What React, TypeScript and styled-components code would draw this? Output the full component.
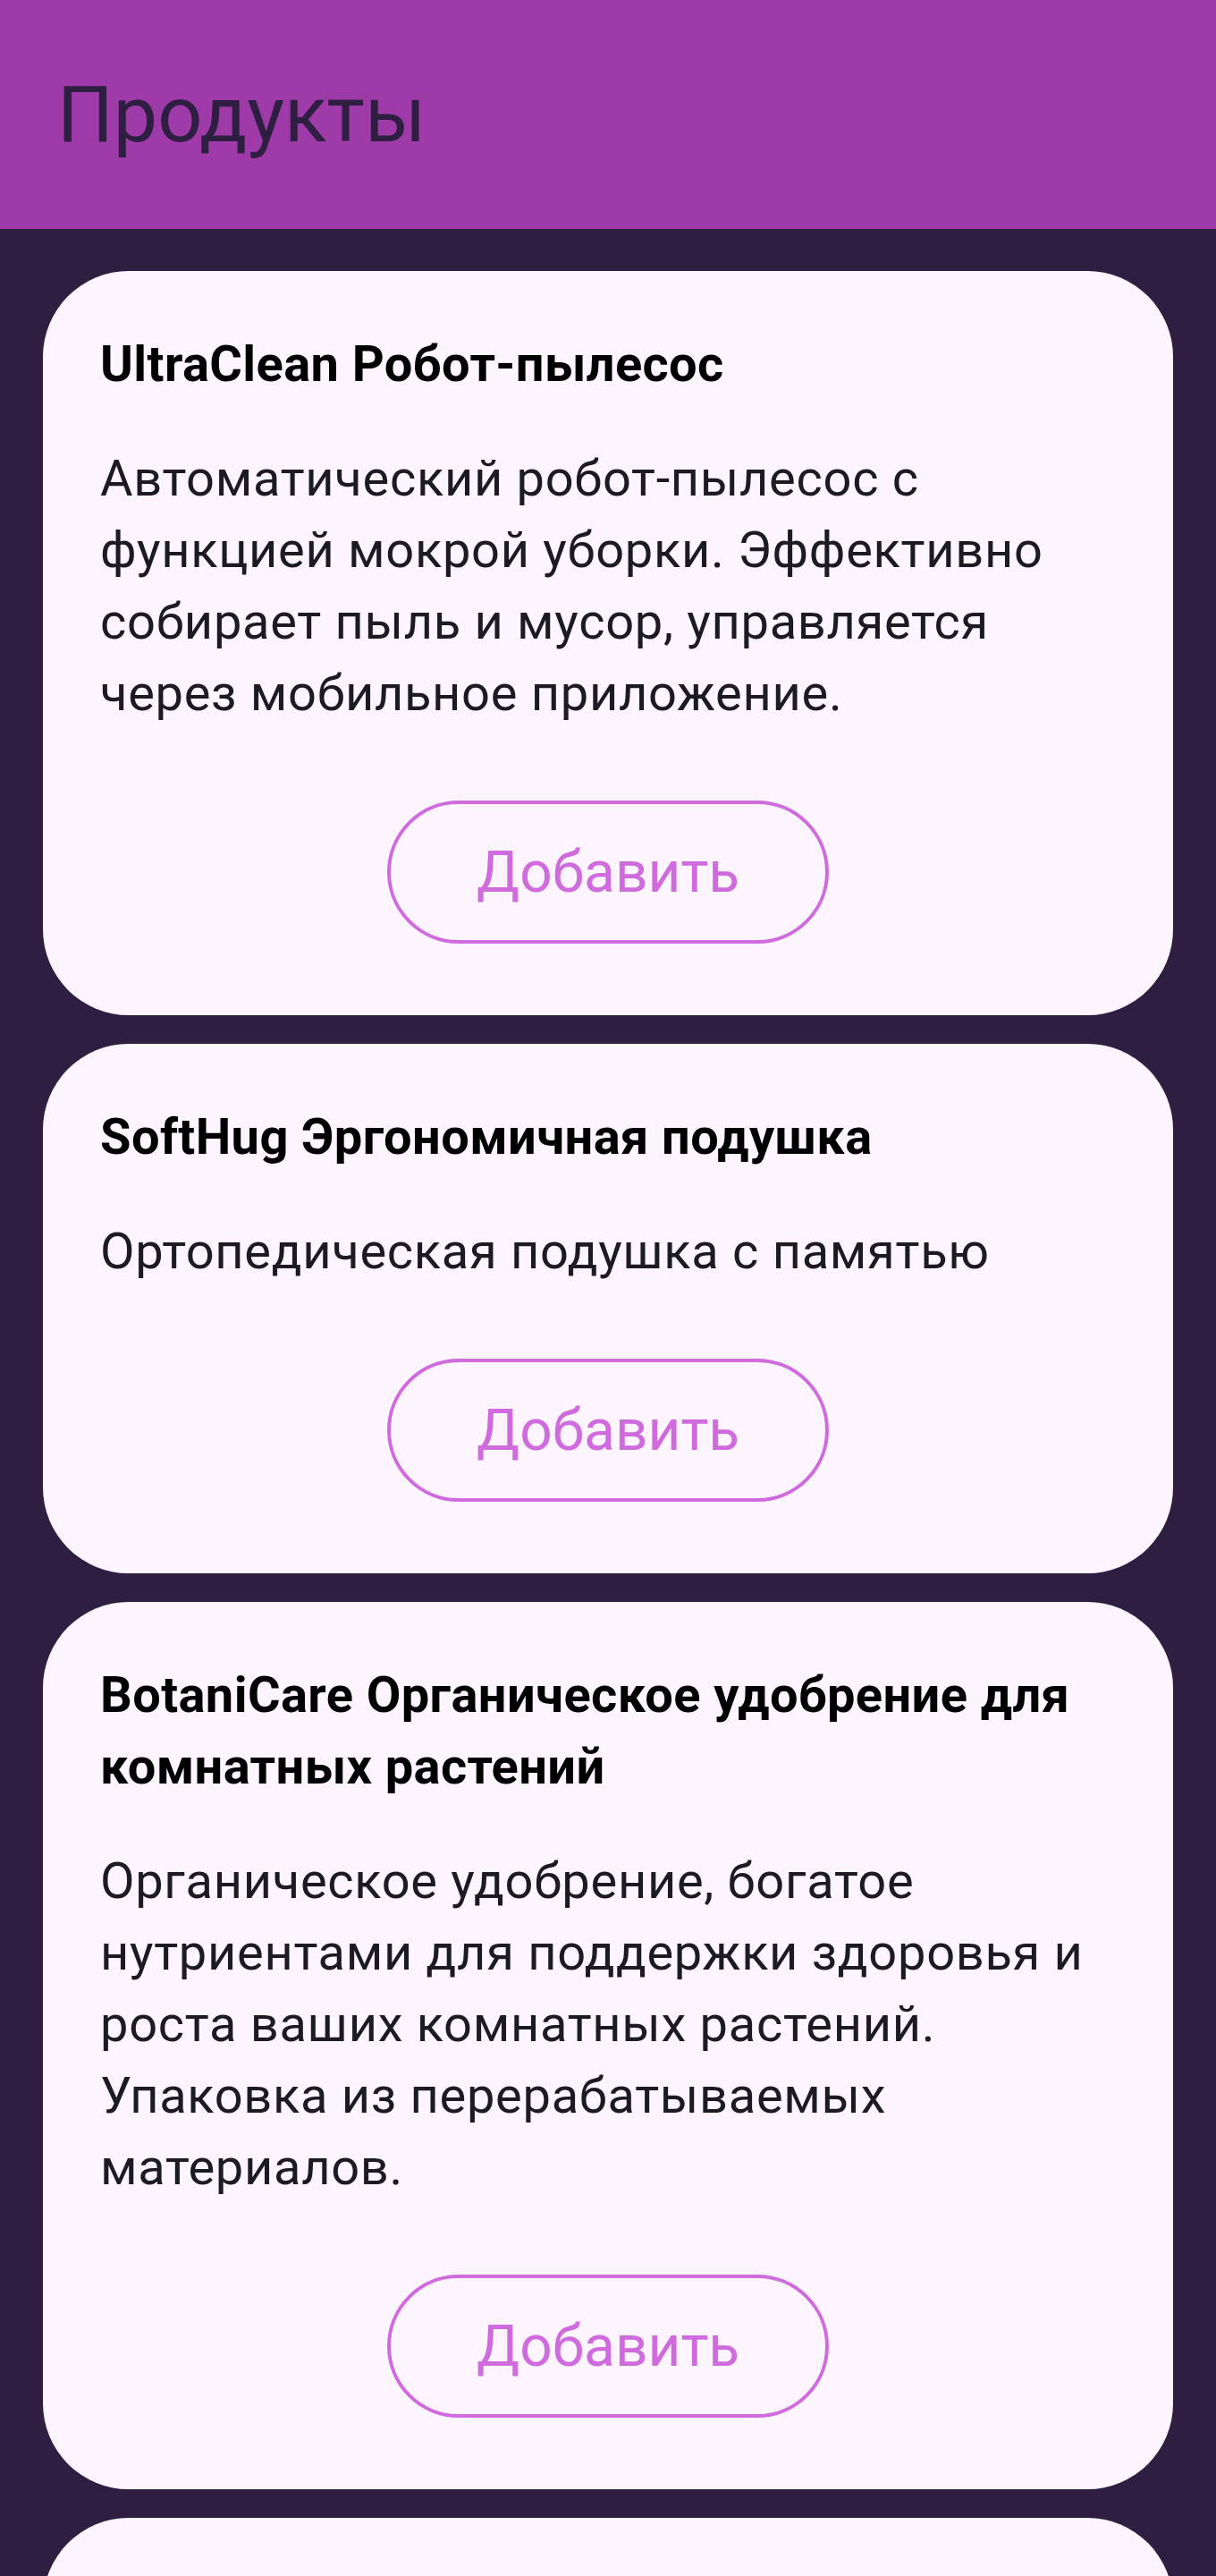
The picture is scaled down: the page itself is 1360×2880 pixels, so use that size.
import React from 'react';
import styled, { createGlobalStyle } from 'styled-components';

const GlobalStyle = createGlobalStyle`
    html, body {
        margin: 0;
        padding: 0;
        background: #2e1f42;
        font-family: Roboto, "Noto Sans", "Liberation Sans", sans-serif;
    }
`;

const Screen = styled.div`
    height: 2880px;
    overflow: hidden;
    background: #2e1f42;
`;

const TopBar = styled.header`
    height: 256px;
    display: flex;
    align-items: center;
    padding: 0 64px;
    background: #9e3ba8;
`;

const TopBarTitle = styled.h1`
    margin: 0;
    font-size: 88px;
    font-weight: 400;
    line-height: 112px;
    color: #2e1f42;
`;

const ProductList = styled.main`
    display: flex;
    flex-direction: column;
    gap: 32px;
    padding: 47px 48px 48px;
`;

const Card = styled.section`
    display: flex;
    flex-direction: column;
    padding: 64px;
    border-radius: 96px;
    background: #fdf5fd;
`;

const CardTitle = styled.h2`
    margin: 0;
    font-size: 56px;
    font-weight: 700;
    line-height: 80px;
    letter-spacing: 0.4px;
    color: #000000;
`;

const CardText = styled.p`
    margin: 48px 0 0;
    font-size: 56px;
    font-weight: 400;
    line-height: 80px;
    letter-spacing: 0.7px;
    color: #1c1b1f;
`;

const ButtonRow = styled.div`
    display: flex;
    justify-content: center;
    padding: 16px 0;
    margin-top: 64px;
`;

const AddButton = styled.button`
    box-sizing: border-box;
    height: 160px;
    padding: 0 96px;
    border: 4px solid #d06bde;
    border-radius: 80px;
    background: transparent;
    font-family: Roboto, "Noto Sans", sans-serif;
    font-size: 64px;
    font-weight: 400;
    letter-spacing: 0;
    color: #d06bde;
    cursor: pointer;
`;

type Product = {
    name: string;
    description: string;
};

// the last card only peeks in at the bottom edge of the screen
const products: Product[] = [
    {
        name: 'UltraClean Робот-пылесос',
        description: 'Автоматический робот-пылесос с функцией мокрой уборки. Эффективно собирает пыль и мусор, управляется через мобильное приложение.',
    },
    {
        name: 'SoftHug Эргономичная подушка',
        description: 'Ортопедическая подушка с памятью',
    },
    {
        name: 'BotaniCare Органическое удобрение для комнатных растений',
        description: 'Органическое удобрение, богатое нутриентами для поддержки здоровья и роста ваших комнатных растений. Упаковка из перерабатываемых материалов.',
    },
    {
        name: 'AquaPure Фильтр для воды',
        description: 'Компактный фильтр-кувшин для очистки водопроводной воды.',
    },
];

const App = () => {
    return (
        <Screen>
            <GlobalStyle />
            <TopBar>
                <TopBarTitle>Продукты</TopBarTitle>
            </TopBar>
            <ProductList>
                { products.map((item) => (
                    <Card key={ item.name }>
                        <CardTitle>{ item.name }</CardTitle>
                        <CardText>{ item.description }</CardText>
                        <ButtonRow>
                            <AddButton type="button">Добавить</AddButton>
                        </ButtonRow>
                    </Card>
                )) }
            </ProductList>
        </Screen>
    );
};

export default App;
